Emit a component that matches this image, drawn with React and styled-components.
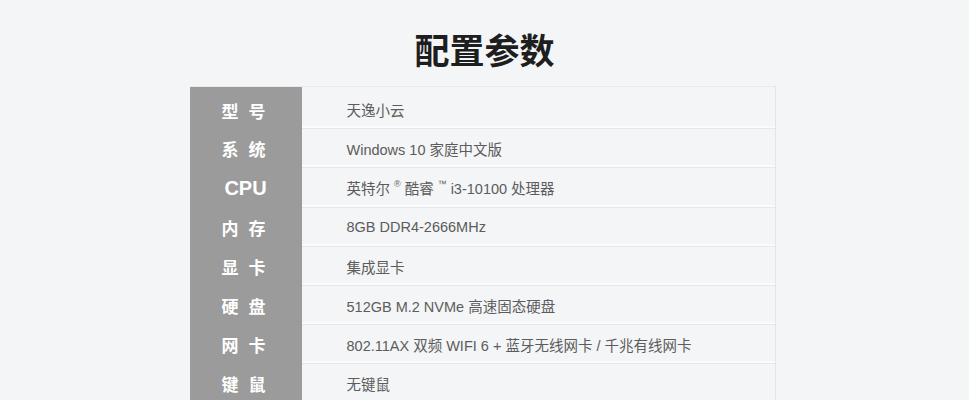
import React from "react";
import styled, { createGlobalStyle } from "styled-components";

const GlobalStyle = createGlobalStyle`
  html, body {
    margin: 0;
    padding: 0;
    background: #f4f5f7;
  }
  body {
    font-family: "Liberation Sans", "Noto Sans CJK SC", sans-serif;
  }
`;

const Page = styled.div`
  width: 969px;
  height: 400px;
  overflow: hidden;
  display: flex;
  flex-direction: column;
  align-items: center;
`;

const Title = styled.h1`
  margin: 28px 0 0;
  height: 42px;
  line-height: 42px;
  font-family: "Noto Sans CJK SC", sans-serif;
  font-size: 35px;
  font-weight: 700;
  color: #1e1e1e;
`;

const Table = styled.div`
  margin-top: 16px;
  margin-right: 4px;
  width: 585px;
  border-top: 1px solid #e8e9ec;
  border-right: 1px solid #e3e4e7;
  display: flex;
  flex-direction: column;
`;

const Row = styled.div`
  display: grid;
  grid-template-columns: 112px 1fr;
  flex: none;
  height: ${(p) => (p.$first ? "42px" : p.$tall ? "40px" : "39px")};
`;

const Label = styled.div`
  background: #9b9b9b;
  color: #fff;
  display: flex;
  align-items: center;
  justify-content: center;
  padding-top: ${(p) => (p.$first ? "4px" : "0")};
  font-family: ${(p) =>
    p.$latin
      ? '"Liberation Sans", sans-serif'
      : '"Noto Sans CJK SC", sans-serif'};
  font-size: ${(p) => (p.$latin ? "20px" : "17px")};
  font-weight: 700;
  letter-spacing: ${(p) => (p.$latin ? "0" : "10px")};
  text-indent: ${(p) => (p.$latin ? "0" : "6px")};
  box-sizing: border-box;
`;

const Value = styled.div`
  display: flex;
  align-items: center;
  padding-left: 45px;
  padding-top: ${(p) => (p.$first ? "4px" : "0")};
  border-bottom: 1px solid #e6e7ea;
  box-shadow: inset 0 -2px 0 #fafbfc;
  font-size: 14.5px;
  color: #5c5c5c;
  box-sizing: border-box;
  white-space: nowrap;
`;

const Sup = styled.span`
  font-size: 9px;
  position: relative;
  top: -4px;
  margin: 0 4px;
`;

const specs = [
  { label: "型号", value: "天逸小云" },
  { label: "系统", value: "Windows 10 家庭中文版" },
  {
    label: "CPU",
    latin: true,
    tall: true,
    value: (
      <>
        英特尔<Sup>®</Sup>酷睿<Sup>™</Sup>i3-10100 处理器
      </>
    ),
  },
  { label: "内存", value: "8GB DDR4-2666MHz" },
  { label: "显卡", value: "集成显卡" },
  { label: "硬盘", value: "512GB M.2 NVMe 高速固态硬盘" },
  { label: "网卡", value: "802.11AX 双频 WIFI 6 + 蓝牙无线网卡 / 千兆有线网卡" },
  { label: "键鼠", value: "无键鼠" },
];

const App = () => {
  return (
    <Page>
      <GlobalStyle />
      <Title>配置参数</Title>
      <Table>
        {specs.map((s, i) => (
          <Row key={s.label} $first={i === 0} $tall={s.tall}>
            <Label $latin={s.latin} $first={i === 0}>
              {s.label}
            </Label>
            <Value $first={i === 0}>{s.value}</Value>
          </Row>
        ))}
      </Table>
    </Page>
  );
};

export default App;
